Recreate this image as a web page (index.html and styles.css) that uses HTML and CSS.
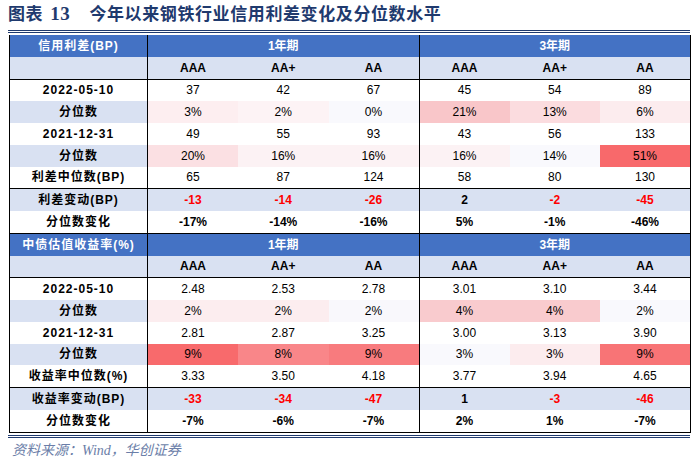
FILE: index.html
```html
<!DOCTYPE html>
<html lang="zh-CN">
<head>
<meta charset="utf-8">
<title>今年以来钢铁行业信用利差变化及分位数水平</title>
<link rel="stylesheet" href="styles.css">
</head>
<body>
<div class="page">
  <h1 class="title"><span>图表</span><span class="t-num">13</span><span class="t-text">今年以来钢铁行业信用利差变化及分位数水平</span></h1>
  <div class="rule"></div>
  <table class="grid">
    <colgroup>
      <col class="c-label">
      <col class="c-data"><col class="c-data"><col class="c-data">
      <col class="c-data"><col class="c-data"><col class="c-data">
    </colgroup>
    <tbody>
      <tr class="head">
        <td class="lbl">信用利差(BP)</td>
        <td colspan="3" class="sep">1年期</td>
        <td colspan="3" class="end">3年期</td>
      </tr>
      <tr class="sub line-b">
        <td class="lbl"></td>
        <td>AAA</td><td>AA+</td><td class="sep">AA</td>
        <td>AAA</td><td>AA+</td><td class="end">AA</td>
      </tr>
      <tr>
        <td class="lbl">2022-05-10</td>
        <td>37</td><td>42</td><td class="sep">67</td>
        <td>45</td><td>54</td><td class="end">89</td>
      </tr>
      <tr class="pct">
        <td class="lbl">分位数</td>
        <td style="background:#fdeef0">3%</td><td style="background:#fdf3f5">2%</td><td class="sep" style="background:#f9f9fd">0%</td>
        <td style="background:#f9c6c9">21%</td><td style="background:#fbdcdf">13%</td><td class="end" style="background:#fcecee">6%</td>
      </tr>
      <tr>
        <td class="lbl">2021-12-31</td>
        <td>49</td><td>55</td><td class="sep">93</td>
        <td>43</td><td>56</td><td class="end">133</td>
      </tr>
      <tr class="pct">
        <td class="lbl">分位数</td>
        <td style="background:#fbe0e3">20%</td><td style="background:#fcf2f4">16%</td><td class="sep" style="background:#fcf2f4">16%</td>
        <td style="background:#fcf2f4">16%</td><td style="background:#f9f9fd">14%</td><td class="end" style="background:#f8696b">51%</td>
      </tr>
      <tr class="line-b">
        <td class="lbl">利差中位数(BP)</td>
        <td>65</td><td>87</td><td class="sep">124</td>
        <td>58</td><td>80</td><td class="end">130</td>
      </tr>
      <tr class="band strong">
        <td class="lbl">利差变动(BP)</td>
        <td class="neg">-13</td><td class="neg">-14</td><td class="sep neg">-26</td>
        <td>2</td><td class="neg">-2</td><td class="end neg">-45</td>
      </tr>
      <tr class="strong line-b">
        <td class="lbl">分位数变化</td>
        <td>-17%</td><td>-14%</td><td class="sep">-16%</td>
        <td>5%</td><td>-1%</td><td class="end">-46%</td>
      </tr>

      <tr class="head">
        <td class="lbl">中债估值收益率(%)</td>
        <td colspan="3" class="sep">1年期</td>
        <td colspan="3" class="end">3年期</td>
      </tr>
      <tr class="sub line-b">
        <td class="lbl"></td>
        <td>AAA</td><td>AA+</td><td class="sep">AA</td>
        <td>AAA</td><td>AA+</td><td class="end">AA</td>
      </tr>
      <tr>
        <td class="lbl">2022-05-10</td>
        <td>2.48</td><td>2.53</td><td class="sep">2.78</td>
        <td>3.01</td><td>3.10</td><td class="end">3.44</td>
      </tr>
      <tr class="pct">
        <td class="lbl">分位数</td>
        <td style="background:#fcedef">2%</td><td style="background:#fcedef">2%</td><td class="sep" style="background:#f9f8fc">2%</td>
        <td style="background:#f9cbce">4%</td><td style="background:#f9cbce">4%</td><td class="end" style="background:#f9f9fd">2%</td>
      </tr>
      <tr>
        <td class="lbl">2021-12-31</td>
        <td>2.81</td><td>2.87</td><td class="sep">3.25</td>
        <td>3.00</td><td>3.13</td><td class="end">3.90</td>
      </tr>
      <tr class="pct">
        <td class="lbl">分位数</td>
        <td style="background:#f86a6c">9%</td><td style="background:#f98689">8%</td><td class="sep" style="background:#f87b7e">9%</td>
        <td style="background:#f9f9fd">3%</td><td style="background:#fcecee">3%</td><td class="end" style="background:#f87476">9%</td>
      </tr>
      <tr class="line-b">
        <td class="lbl">收益率中位数(%)</td>
        <td>3.33</td><td>3.50</td><td class="sep">4.18</td>
        <td>3.77</td><td>3.94</td><td class="end">4.65</td>
      </tr>
      <tr class="band strong">
        <td class="lbl">收益率变动(BP)</td>
        <td class="neg">-33</td><td class="neg">-34</td><td class="sep neg">-47</td>
        <td>1</td><td class="neg">-3</td><td class="end neg">-46</td>
      </tr>
      <tr class="strong line-b">
        <td class="lbl">分位数变化</td>
        <td>-7%</td><td>-6%</td><td class="sep">-7%</td>
        <td>2%</td><td>1%</td><td class="end">-7%</td>
      </tr>
    </tbody>
  </table>
  <div class="rule rule-bottom"></div>
  <p class="source">资料来源：Wind，华创证券</p>
</div>
</body>
</html>
```

FILE: styles.css
```css
html, body {
  margin: 0;
  padding: 0;
  background: #ffffff;
}

body {
  font-family: "Liberation Sans", "Noto Sans CJK SC", sans-serif;
  color: #000;
}

.page {
  padding-left: 8px;
  width: 682px;
}

.title {
  margin: 0;
  height: 25px;
  line-height: 25px;
  font-size: 17px;
  font-weight: 700;
  color: #1f3a6e;
  font-family: "Noto Sans CJK SC", sans-serif;
  letter-spacing: 0.6px;
  white-space: nowrap;
}

.t-num {
  font-family: "Liberation Serif", serif;
  font-size: 19px;
  margin-left: 7px;
}

.t-text {
  margin-left: 19px;
}

.rule {
  margin-top: 5px;
  border-top: 3px double #1f3a6e;
}

.rule-bottom {
  margin-top: 2px;
}

.grid {
  margin: 2px 0 0 1px;
  width: 681px;
  border-collapse: collapse;
  table-layout: fixed;
  font-size: 12px;
}

.c-label { width: 138px; }
.c-data { width: 90.5px; }

.grid td {
  height: 21.75px;
  padding: 0;
  text-align: center;
  vertical-align: middle;
  white-space: nowrap;
  line-height: 14px;
}

.lbl {
  border-left: 1px solid #000;
  border-right: 1px solid #000;
  font-weight: 700;
  font-family: "Liberation Sans", "Noto Sans CJK SC", sans-serif;
  letter-spacing: 1px;
}

.sep { border-right: 1px solid #000; }
.end { border-right: 1px solid #000; }

.line-b td { border-bottom: 1px solid #000; }

.head td {
  background: #4472c4;
  color: #ffffff;
  font-weight: 700;
}

.sub td {
  background: #d9e1f2;
  font-weight: 700;
}

.pct .lbl { background: #d9e1f2; }

.band td { background: #d9e1f2; }

.strong td { font-weight: 700; }

.neg { color: #ff0000; }

.source {
  margin: 3px 0 0 4px;
  font-size: 14px;
  line-height: 20px;
  font-style: italic;
  color: #6b7ea8;
  font-family: "Liberation Serif", "Noto Sans CJK SC", serif;
}
```
